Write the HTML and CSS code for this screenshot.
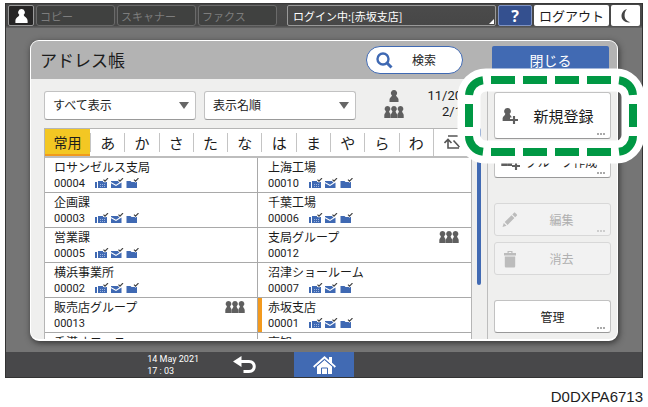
FILE: index.html
```html
<!DOCTYPE html>
<html lang="ja">
<head>
<meta charset="utf-8">
<title>アドレス帳</title>
<link rel="stylesheet" href="styles.css">
</head>
<body>
<svg class="sprite" aria-hidden="true">
  <symbol id="pawn" viewBox="0 0 10 12"><path d="M5 0a3 3 0 0 1 2 5.300C7.100 7 9.500 7.500 9.500 9.500V12H.5V9.500C.5 7.500 2.900 7 3 5.300A3 3 0 0 1 5 0z"/></symbol>
  <symbol id="slim" viewBox="0 0 7 12"><path d="M3.500 0a2.900 2.900 0 0 1 1.600 5.300c0 1.500 1.600 2.200 1.600 4V12H.3V9.300c0-1.800 1.600-2.500 1.600-4A2.900 2.900 0 0 1 3.500 0z"/></symbol>
  <symbol id="group" viewBox="0 0 20 12"><use href="#slim" width="7" height="12"/><use href="#slim" x="6.500" width="7" height="12"/><use href="#slim" x="13" width="7" height="12"/></symbol>
  <symbol id="plus" viewBox="0 0 6 6"><path d="M2.200 0h1.600v2.200H6v1.600H3.800V6H2.200V3.800H0V2.200h2.200z"/></symbol>
  <symbol id="media" viewBox="0 0 44 11">
    <g fill="#3f69b3">
      <path d="M0 4h2v6H0zM3 3h5v1h4v6H3z"/>
      <path d="M16 3h7l1.500 1.500L21 6.800 16 4zM16 5.200l5 2.700 5.500-3.500V10H16z"/>
      <path d="M31.500 3h4l1 1H42v6H31.500z"/>
    </g>
    <path d="M5 6.500h1M7 6.500h1M9 6.500h1M5 8.500h1M7 8.500h1M9 8.500h1" stroke="#9db3dd" fill="none"/>
    <path d="M8.500 1.800l1.500 1.500 3-3M23.500 1.800l1.500 1.500 3-3M39 1.800l1.500 1.500 3-3" stroke="#fff" stroke-width="2.200" fill="none"/>
    <path d="M8.500 1.600l1.500 1.500 3-3M23.500 1.600l1.500 1.500 3-3M39 1.600l1.500 1.500 3-3" stroke="#444" stroke-width="1.200" fill="none"/>
  </symbol>
</svg>

<figure class="figure">
  <div class="device">
    <header class="topbar">
      <button class="user" aria-label="ユーザー"><svg width="13" height="14" viewBox="0 0 13 14"><path d="M6.500 0a3.300 3.300 0 0 1 2.200 5.800C9 8 12.600 8.500 12.600 12v2H.4v-2C.4 8.500 4 8 4.300 5.800A3.300 3.300 0 0 1 6.500 0z" fill="#fff"/></svg></button>
      <button class="app">コピー</button>
      <button class="app">スキャナー</button>
      <button class="app">ファクス</button>
      <button class="login">ログイン中:[赤坂支店]</button>
      <button class="help">?</button>
      <button class="logout">ログアウト</button>
      <button class="sleep" aria-label="スリープ"><svg width="10" height="14" viewBox="0 0 10 14"><path d="M6 0C2.500 1 .5 4 .5 7c0 4 3.500 7 9 6.300C5.500 12.300 3.800 10 3.600 6.800 3.500 4 4.300 1.800 6 0z" fill="#444"/></svg></button>
    </header>

    <main class="stage">
      <section class="dialog">
        <header class="dialog-head">
          <h1 class="title">アドレス帳</h1>
          <button class="search"><svg width="17" height="17" viewBox="0 0 17 17" fill="none" stroke="#3f69b3"><circle cx="7" cy="7" r="5.500" stroke-width="2.400"/><path d="M11 11l4.500 4.500" stroke-width="3"/></svg><span>検索</span></button>
          <button class="close">閉じる</button>
        </header>

        <div class="dialog-body">
          <div class="book">
            <div class="filters">
              <div class="picker"><select aria-label="表示"><option>すべて表示</option></select></div>
              <div class="picker"><select aria-label="並び順"><option>表示名順</option></select></div>
              <div class="counts">
                <svg width="20" height="12"><use href="#pawn" x="5" width="10" height="12"/></svg><span>11/20</span>
                <svg width="20" height="12"><use href="#group" width="20" height="12"/></svg><span>2/1</span>
              </div>
            </div>
            <div class="pane">
              <div class="sheet">
                <nav class="index">
                  <button class="current">常用</button><button>あ</button><button>か</button><button>さ</button><button>た</button><button>な</button><button>は</button><button>ま</button><button>や</button><button>ら</button><button>わ</button><button class="switch" aria-label="切り替え"><svg width="17" height="15" viewBox="0 0 17 15" fill="none" stroke="#555" stroke-width="1.600"><path d="M4 1h10M0.500 8l3.500-3.500L7.500 8M4 5v8h11M9.500 5.500l6 6.500"/></svg></button>
                </nav>
                <ul class="entries">
                  <li><div class="name">ロサンゼルス支局</div><div class="meta"><span>00004</span><svg class="media"><use href="#media"/></svg></div></li>
                  <li><div class="name">上海工場</div><div class="meta"><span>00010</span><svg class="media"><use href="#media"/></svg></div></li>
                  <li><div class="name">企画課</div><div class="meta"><span>00003</span><svg class="media"><use href="#media"/></svg></div></li>
                  <li><div class="name">千葉工場</div><div class="meta"><span>00006</span><svg class="media"><use href="#media"/></svg></div></li>
                  <li><div class="name">営業課</div><div class="meta"><span>00005</span><svg class="media"><use href="#media"/></svg></div></li>
                  <li><div class="name">支局グループ<svg class="many"><use href="#group"/></svg></div><div class="meta"><span>00012</span></div></li>
                  <li><div class="name">横浜事業所</div><div class="meta"><span>00002</span><svg class="media"><use href="#media"/></svg></div></li>
                  <li><div class="name">沼津ショールーム</div><div class="meta"><span>00007</span><svg class="media"><use href="#media"/></svg></div></li>
                  <li><div class="name">販売店グループ<svg class="many"><use href="#group"/></svg></div><div class="meta"><span>00013</span></div></li>
                  <li class="marked"><div class="name">赤坂支店</div><div class="meta"><span>00001</span><svg class="media"><use href="#media"/></svg></div></li>
                  <li><div class="name">香港オフィス</div></li>
                  <li><div class="name">高知</div></li>
                </ul>
              </div>
              <div class="scroll"><div class="thumb"></div></div>
            </div>
          </div>

          <aside class="actions">
            <div class="group">
              <div class="callout">
                <button class="action primary"><svg class="glyph" width="18" height="18"><use href="#pawn" x="1" y="1" width="11" height="13"/><use href="#plus" x="9" y="9" width="8" height="8" stroke="#fff" stroke-width="2" paint-order="stroke"/></svg><span>新規登録</span></button>
                <svg class="ring" width="188" height="96" viewBox="0 0 188 96" fill="none">
                  <rect x="12" y="12" width="164" height="72" rx="17" stroke="#fff" stroke-width="23"/>
                  <g stroke="#009844" stroke-width="8">
                    <path d="M34 12h24M66 12h24M98 12h24M130 12h24M34 84h24M66 84h24M98 84h24M130 84h24M12 36v23M176 36v23"/>
                    <path d="M26 12.200A16 16 0 0 0 12 27M162 12.200A16 16 0 0 1 176 27M26 83.800A16 16 0 0 1 12 68M162 83.800A16 16 0 0 0 176 68"/>
                  </g>
                </svg>
              </div>
              <button class="action"><svg class="glyph" width="20" height="18"><use href="#group" y="2" width="18" height="11"/><use href="#plus" x="11" y="9" width="8" height="8" stroke="#fff" stroke-width="2" paint-order="stroke"/></svg><span>グループ作成</span></button>
            </div>
            <div class="group">
              <button class="action" disabled><svg class="glyph" width="18" height="18" viewBox="0 0 18 18"><path d="M1.500 16l1.300-4 2.700 2.700zM3.700 11l6.800-6.800 2.900 2.900-6.800 6.800zM11.300 3.400l1.500-1.500c.5-.5 1-.5 1.500 0l1.400 1.400c.5.5.5 1 0 1.500l-1.500 1.500z"/></svg><span>編集</span></button>
              <button class="action plain" disabled><svg class="glyph" width="18" height="18" viewBox="0 0 18 18"><path d="M3 3h3.500V1h5v2H15v2.500H3zM7.700 2v1h2.600V2zM3.800 6.500h10.400V16c0 1-.5 1.500-1.500 1.500H5.300c-1 0-1.500-.5-1.500-1.500z"/></svg><span>消去</span></button>
            </div>
            <div class="group">
              <button class="action solo"><span>管理</span></button>
            </div>
          </aside>
        </div>
      </section>
    </main>

    <footer class="bottombar">
      <div class="side">
        <time class="clock" datetime="2021-05-14T17:03">14 May 2021<br>17 : 03</time>
        <button class="back" aria-label="戻る"><svg width="23" height="18" viewBox="0 0 23 18"><path d="M8.500 0L0 5.500 8.500 11V7H16c5 0 5 7 0 7h-5.500v3H16c9 0 9-13 0-13H8.500z" fill="#fff"/></svg></button>
      </div>
      <button class="home" aria-label="ホーム"><svg width="23" height="18" viewBox="0 0 23 18"><path d="M11.500 0L16 4V1h3v5.700l4 3.600-1.500 1.500-10-8.800-10 8.800L0 10.300z" fill="#fff"/><path d="M4 10.500L11.500 4 19 10.500V18H4z" fill="#fff"/><path d="M2 11.500l9.500-8.200 9.500 8.200M8.500 18v-6h6v6" fill="none" stroke="#3f69b3"/></svg></button>
    </footer>
  </div>
  <figcaption class="caption">D0DXPA6713</figcaption>
</figure>
</body>
</html>
```

FILE: styles.css
```css
* { box-sizing: border-box; }

body {
  margin: 0;
  background: #fff;
  color: #1c1c1c;
  font: 12px/16px "Noto Sans CJK JP", sans-serif;
}

button, select {
  margin: 0;
  padding: 0;
  border: 0;
  background: none;
  color: inherit;
  font: inherit;
}

svg { display: block; flex: none; }
.sprite { position: absolute; width: 0; height: 0; }

.figure { margin: 0; padding: 3px 5px 0; }
.device { border: 1px solid #333; border-width: 0 1px 1px; background: #757575; }
.caption {
  padding-top: 10px;
  text-align: right;
  font: 15px/18px "Liberation Sans", sans-serif;
}

/* Top bar */
.topbar {
  display: flex;
  gap: 2px;
  height: 25px;
  padding: 2px;
  background: linear-gradient(#333 0, #4b4b4b 8%, #474747 90%, #666 100%);
}
.user {
  display: grid;
  place-items: center;
  width: 26px;
  border: 1px solid #999;
  border-radius: 2px;
  background: #262525;
}
.app {
  width: 79px;
  padding-left: 3px;
  border: 1px solid #6a6a6a;
  border-radius: 3px;
  background: #404140;
  color: #7d7d7d;
  font-size: 11px;
  text-align: left;
}
.login {
  position: relative;
  flex: 1;
  margin-left: 8px;
  padding-left: 5px;
  border: 1px solid #999;
  border-radius: 2px;
  color: #fff;
  font-size: 11px;
  text-align: left;
}
.login::after {
  content: "";
  position: absolute;
  right: 1px;
  bottom: 1px;
  border-left: 5px solid transparent;
  border-bottom: 5px solid #fff;
}
.help {
  width: 34px;
  border: 1px solid #7f93c4;
  border-radius: 2px;
  background: #34508f;
  color: #fff;
  font: bold 16px/18px "Noto Sans", sans-serif;
}
.logout { width: 75px; border-radius: 2px; background: #fff; font-size: 13px; }
.sleep { display: grid; place-items: center; width: 29px; border-radius: 2px; background: #fff; }

/* Dialog */
.stage { padding: 12px 24px 11px; }
.dialog {
  border: 1px solid #fff;
  border-bottom-width: 2px;
  border-radius: 9px;
  background: #efefee;
  box-shadow: 1px 2px 6px #333;
}
.dialog-head {
  display: flex;
  align-items: center;
  height: 38px;
  padding: 0 8px 0 9px;
  border-radius: 8px 8px 0 0;
  background: #b3b3b3;
}
.title { flex: 1; margin: 0; font-size: 17px; font-weight: 400; line-height: 24px; }
.search {
  display: flex;
  align-items: center;
  width: 97px;
  height: 28px;
  margin-right: 29px;
  padding-left: 9px;
  gap: 19px;
  border: 1px solid #3f69b3;
  border-radius: 14px;
  background: #fff;
}
.close {
  width: 117px;
  height: 28px;
  border-radius: 2px;
  background: #416ab3;
  color: #fff;
  font-size: 14px;
}
.dialog-body { display: flex; }
.book { flex: 1; min-width: 0; padding-left: 13px; }

.filters { display: flex; align-items: center; gap: 8px; height: 49px; }
.picker { position: relative; width: 152px; margin-top: 3px; }
.picker select {
  appearance: none;
  width: 100%;
  height: 29px;
  padding: 0 24px 0 8px;
  border: 1px solid #c2c2c2;
  border-bottom-color: #999;
  border-radius: 3px;
  background: #fff;
}
.picker::after {
  content: "";
  position: absolute;
  top: 11px;
  right: 7px;
  border: 5px solid transparent;
  border-top: 7px solid #666;
  border-bottom: 0;
  pointer-events: none;
}
.counts {
  display: grid;
  grid-template-columns: 20px 58px;
  align-items: center;
  margin-left: 20px;
  font: 13px/16px Roboto, sans-serif;
  text-align: right;
  fill: #5f5f5f;
}

.pane { display: flex; }
.sheet { flex: 1; min-width: 0; border: 1px solid #b5b5b5; border-bottom: 0; background: #fff; }
.index {
  display: grid;
  grid-template-columns: 45px repeat(10, 1fr) 38px;
  height: 29px;
  border-bottom: 2px solid #bdbdbd;
}
.index button {
  margin: 4px 0;
  border-left: 1px solid #c4c4c4;
  font-size: 15px;
  line-height: 18px;
}
.index .current {
  margin: 0;
  border-left: 0;
  border-bottom: 2px solid #f09a1c;
  background: #f3c723;
  font-size: 14px;
}
.index .switch { display: grid; place-items: center; margin: 0; }

.entries {
  display: grid;
  grid-template-columns: 1fr calc(50% + 1px);
  grid-auto-rows: 35px;
  max-height: 181px;
  margin: 0;
  padding: 0;
  overflow: hidden;
  list-style: none;
}
.entries li { padding: 1px 12px 0 9px; border-bottom: 1px solid #a9a9a9; }
.entries li:nth-child(even) { border-left: 1px solid #a9a9a9; padding-left: 10px; }
.entries .marked { box-shadow: inset 4px 0 #f39a1e; }
.name { display: flex; justify-content: space-between; align-items: center; line-height: 16px; }
.meta {
  display: flex;
  align-items: center;
  font: 11px/17px Roboto, sans-serif;
}
.meta span { width: 41px; }
.media { width: 44px; height: 11px; }
.many { width: 20px; height: 12px; fill: #5f5f5f; }

.scroll { width: 15px; padding-left: 5px; }
.thumb { width: 4px; height: 157px; border-radius: 2px; background: #416ab3; }

/* Action column */
.actions {
  display: flex;
  flex-direction: column;
  gap: 25px;
  padding: 13px 6px 5px;
  border-left: 1px solid #bdbdbd;
}
.group { display: flex; flex-direction: column; gap: 6px; }
.callout { position: relative; z-index: 1; }
.ring { position: absolute; top: -24px; left: -37px; pointer-events: none; }
.action {
  position: relative;
  display: grid;
  grid-template-columns: 18px 1fr;
  align-items: center;
  width: 117px;
  height: 33px;
  padding: 0 6px;
  border: 1px solid #c2c2c2;
  border-bottom-color: #999;
  border-radius: 3px;
  background: #fff;
  text-align: center;
}
.action::after {
  content: "";
  position: absolute;
  right: 5px;
  bottom: 3px;
  width: 8px;
  height: 2px;
  background: repeating-linear-gradient(90deg, #aaa 0 2px, transparent 2px 3px);
}
.action.primary { grid-template-columns: 22px 1fr; height: 47px; font-size: 15px; }
.action.plain::after { display: none; }
.action.solo { grid-template-columns: 1fr; }
.action:disabled { border-color: #d8d8d8; background: #f2f2f2; color: #b0b0b0; }
.action:disabled::after { opacity: 0.5; }
.glyph { fill: #5f5f5f; }
.action:disabled .glyph { fill: #bcbcbc; }

/* Bottom bar */
.bottombar {
  display: grid;
  grid-template-columns: 1fr 60px 1fr;
  height: 25px;
  background: #48484a;
}
.side { display: flex; align-items: center; justify-content: flex-end; gap: 34px; padding-right: 38px; }
.clock { color: #fff; font: 9px/12px Roboto, sans-serif; }
.home { display: grid; place-items: center; background: #416ab3; }
```
